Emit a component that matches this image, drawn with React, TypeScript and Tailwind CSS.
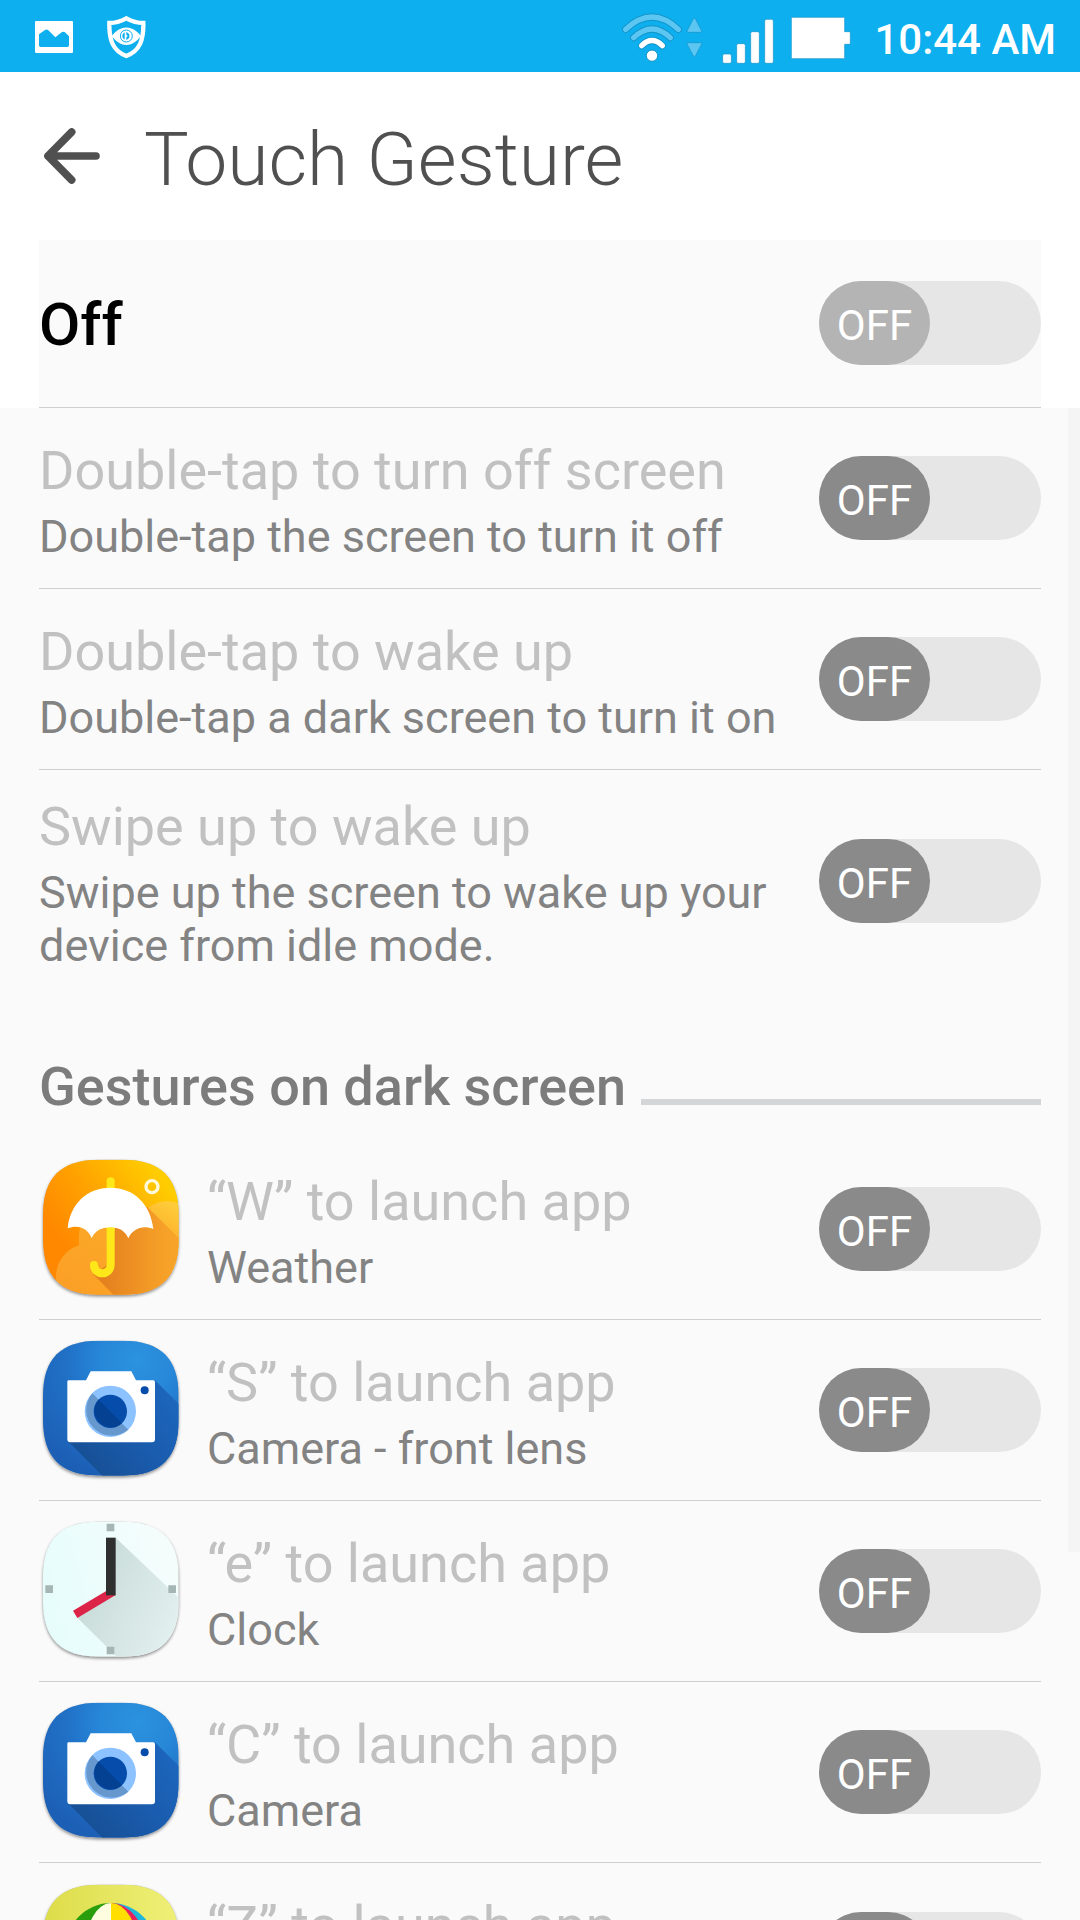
import { useState, type ReactNode } from "react";

const SQUIRCLE =
  "M205 61 H280 C392 61 446 115 446 225 V300 C446 412 392 466 280 466 H205 C93 466 39 412 39 300 V225 C39 115 93 61 205 61 Z";

function AppIcon({ id, children }: { id: string; children: ReactNode }) {
  return (
    <svg
      viewBox="27 53 432 432"
      className="size-36 shrink-0"
      aria-hidden="true"
    >
      <defs>
        <clipPath id={`${id}-clip`}>
          <path d={SQUIRCLE} />
        </clipPath>
        <filter id={`${id}-shadow`} x="-10%" y="-10%" width="120%" height="120%">
          <feDropShadow dx="0" dy="5" stdDeviation="4" floodColor="#000" floodOpacity="0.45" />
        </filter>
      </defs>
      <path d={SQUIRCLE} fill="#bbb" filter={`url(#${id}-shadow)`} />
      <g clipPath={`url(#${id}-clip)`}>{children}</g>
    </svg>
  );
}

function WeatherIcon() {
  return (
    <AppIcon id="weather">
      <defs>
        <linearGradient id="weather-sky" x1="0.15" y1="0.6" x2="0.8" y2="0.1">
          <stop offset="0" stopColor="#ff8800" />
          <stop offset="0.45" stopColor="#ffa200" />
          <stop offset="1" stopColor="#ffcc00" />
        </linearGradient>
        <linearGradient id="weather-cloud" x1="0.3" y1="1" x2="1" y2="0">
          <stop offset="0" stopColor="#fba026" />
          <stop offset="0.6" stopColor="#fba928" />
          <stop offset="1" stopColor="#ffd23c" />
        </linearGradient>
        <linearGradient id="weather-shade" x1="0.1" y1="0.5" x2="1" y2="0.5">
          <stop offset="0" stopColor="#e4801f" />
          <stop offset="0.75" stopColor="#f6a028" />
          <stop offset="1" stopColor="#f8a529" />
        </linearGradient>
      </defs>
      <rect x="30" y="50" width="430" height="430" fill="url(#weather-sky)" />
      <path
        d="M78 480 V412 A98 98 0 0 1 147 318 C142 240 175 200 240 200 C300 190 330 210 352 208 A88 88 0 0 1 460 200 V480 Z"
        fill="url(#weather-cloud)"
      />
      <path d="M242 210 L352 203 L460 310 V480 H264 L190 405 L242 370 Z" fill="url(#weather-shade)" />
      <path d="M242 270 V126" stroke="#ffe81a" strokeWidth="24" strokeLinecap="round" />
      <path
        d="M242 250 V377 A25 25 0 0 1 192 377"
        fill="none"
        stroke="#ffe81a"
        strokeWidth="24"
        strokeLinecap="round"
      />
      <path
        d="M113 267 C120 195 170 145 241 145 C312 145 362 195 370 269 C338 256 308 268 295 297 C285 274 266 264 241 264 C215 264 195 274 185 297 C175 268 145 254 113 267 Z"
        fill="#fff"
      />
      <circle cx="366" cy="142" r="18" fill="none" stroke="#fff9dc" strokeWidth="10" />
    </AppIcon>
  );
}

function CameraIcon({ id }: { id: string }) {
  return (
    <AppIcon id={id}>
      <defs>
        <radialGradient id={`${id}-bg`} cx="0.68" cy="0.16" r="0.85">
          <stop offset="0" stopColor="#2b93df" />
          <stop offset="0.3" stopColor="#2787d8" />
          <stop offset="0.6" stopColor="#2070c6" />
          <stop offset="1" stopColor="#1c60b6" />
        </radialGradient>
        <linearGradient id={`${id}-shade`} x1="0.1" y1="0.9" x2="1" y2="0.3">
          <stop offset="0" stopColor="#164e91" />
          <stop offset="0.5" stopColor="#1a5aab" />
          <stop offset="1" stopColor="#1c66bc" />
        </linearGradient>
      </defs>
      <rect x="30" y="50" width="430" height="430" fill={`url(#${id}-bg)`} />
      <path d="M374 179 L460 265 V480 H230 L115 363 Z" fill={`url(#${id}-shade)`} />
      <path
        d="M116 180 H168 L182 153 H304 L318 180 H370 Q375 180 375 185 V357 Q375 366 366 366 H121 Q112 366 112 357 V184 Q112 180 116 180 Z"
        fill="#fff"
      />
      <circle cx="241" cy="273" r="77" fill="#8cc2ff" />
      <path d="M187 219 A77 77 0 0 0 295 328 Z" fill="#6697cd" />
      <circle cx="241" cy="273" r="50" fill="#064cab" />
      <path d="M206 238 A50 50 0 0 0 276 309 Z" fill="#044192" />
      <circle cx="344" cy="210" r="12" fill="#064cab" />
    </AppIcon>
  );
}

function ClockIcon() {
  return (
    <AppIcon id="clock">
      <defs>
        <linearGradient id="clock-bg" x1="0" y1="0.5" x2="1" y2="0.2">
          <stop offset="0" stopColor="#e6fdfc" />
          <stop offset="1" stopColor="#f6fdfc" />
        </linearGradient>
        <linearGradient id="clock-shade" x1="0.1" y1="0.4" x2="0.9" y2="0.8">
          <stop offset="0" stopColor="#c9dcda" />
          <stop offset="1" stopColor="#e2f0ef" />
        </linearGradient>
      </defs>
      <rect x="30" y="50" width="430" height="430" fill="url(#clock-bg)" />
      <path d="M257 109 L460 302 V480 H274 L142 349 L230 270 Z" fill="url(#clock-shade)" />
      <path d="M230 67 h23 v23 h-23 Z M415 252 h23 v23 h-23 Z M230 436 h23 v23 h-23 Z M46 252 h23 v23 h-23 Z" fill="#a5b6b4" />
      <path d="M129 328 L230 268 L257 281 L142 350 Z" fill="#dc2449" />
      <rect x="228" y="109" width="29" height="173" fill="#2f2f2f" />
    </AppIcon>
  );
}

function GalleryIcon() {
  return (
    <AppIcon id="gallery">
      <defs>
        <linearGradient id="gallery-bg" x1="0" y1="0" x2="1" y2="0">
          <stop offset="0" stopColor="#dcdc48" />
          <stop offset="1" stopColor="#f0f07a" />
        </linearGradient>
        <clipPath id="gallery-left">
          <rect x="90" y="100" width="153" height="300" />
        </clipPath>
        <clipPath id="gallery-right">
          <rect x="243" y="100" width="160" height="300" />
        </clipPath>
      </defs>
      <rect x="30" y="50" width="430" height="430" fill="url(#gallery-bg)" />
      <g clipPath="url(#gallery-left)">
        <ellipse cx="243" cy="251" rx="135" ry="135" fill="#2a9d0c" />
        <ellipse cx="243" cy="251" rx="76" ry="135" fill="#fffde0" />
      </g>
      <g clipPath="url(#gallery-right)">
        <ellipse cx="243" cy="251" rx="135" ry="135" fill="#1fb6dc" />
        <ellipse cx="243" cy="251" rx="103" ry="135" fill="#e8205c" />
        <ellipse cx="243" cy="251" rx="80" ry="135" fill="#ffde00" />
      </g>
    </AppIcon>
  );
}

function Switch({ labelledBy, pale = false }: { labelledBy: string; pale?: boolean }) {
  const [on, setOn] = useState(false);
  const thumb = on ? "ml-auto bg-[#0dafee]" : pale ? "bg-[#b4b4b4]" : "bg-[#8a8a8a]";
  return (
    <label className="relative flex h-21 w-[222px] shrink-0 cursor-pointer rounded-full bg-[#e6e6e6]">
      <input
        type="checkbox"
        role="switch"
        aria-labelledby={labelledBy}
        checked={on}
        onChange={() => setOn(!on)}
        className="absolute inset-0 cursor-pointer opacity-0"
      />
      <span
        className={`flex h-full w-1/2 items-center justify-center rounded-full pt-1.5 text-[42px] leading-none text-white ${thumb}`}
      >
        {on ? "ON" : "OFF"}
      </span>
    </label>
  );
}

type Setting = { id: string; title: string; detail: string; icon?: ReactNode };

const WAKE_SETTINGS: Setting[] = [
  { id: "tap-off", title: "Double-tap to turn off screen", detail: "Double-tap the screen to turn it off" },
  { id: "tap-wake", title: "Double-tap to wake up", detail: "Double-tap a dark screen to turn it on" },
  { id: "swipe-wake", title: "Swipe up to wake up", detail: "Swipe up the screen to wake up your device from idle mode." },
];

const LAUNCH_SETTINGS: Setting[] = [
  { id: "w", title: "“W” to launch app", detail: "Weather", icon: <WeatherIcon /> },
  { id: "s", title: "“S” to launch app", detail: "Camera - front lens", icon: <CameraIcon id="camera-front" /> },
  { id: "e", title: "“e” to launch app", detail: "Clock", icon: <ClockIcon /> },
  { id: "c", title: "“C” to launch app", detail: "Camera", icon: <CameraIcon id="camera" /> },
  { id: "z", title: "“Z” to launch app", detail: "Gallery", icon: <GalleryIcon /> },
];

function SettingList({ items }: { items: Setting[] }) {
  return (
    <ul>
      {items.map((item) => (
        <li
          key={item.id}
          className="flex min-h-[181px] items-center border-b border-[#cfcfcf] last:border-b-0"
        >
          {item.icon}
          <div className={item.icon ? "ml-6 flex-1 pt-[25px] pb-5" : "flex-1 pt-[25px] pb-5"}>
            <h3 id={item.id} className="mb-[7px] text-[54px] leading-[64px] text-[#c1c1c1]">
              {item.title}
            </h3>
            <p className="text-[45px] leading-[53px] text-[#838383]">{item.detail}</p>
          </div>
          <Switch labelledBy={item.id} />
        </li>
      ))}
    </ul>
  );
}

function StatusBar() {
  return (
    <div className="flex h-18 shrink-0 items-center bg-[#0dafee] pr-6 pl-[35px] text-white">
      <svg viewBox="105 0 114 216" className="h-18 w-[38px]" aria-hidden="true">
        <path
          fill="#fff"
          fillRule="evenodd"
          d="M108 63 H216 Q219 63 219 66 V156 Q219 159 216 159 H108 Q105 159 105 156 V66 Q105 63 108 63 Z M117 103 V136 Q117 141 122 141 H202 Q207 141 207 136 V109 L195 97 Q190 93 185 97 L166 112 L145 91 Q140 86 135 90 Z"
        />
      </svg>
      <svg viewBox="320 0 117 216" className="ml-[34px] h-18 w-[39px]" aria-hidden="true">
        <path
          d="M378 55 Q352 69 327 69 C326 120 337 152 378 168 C419 152 430 120 429 69 Q404 69 378 55 Z"
          fill="none"
          stroke="#fff"
          strokeWidth="13"
        />
        <path d="M334 108 C362 74 394 74 422 108 C394 144 362 144 334 108 Z" fill="#fff" />
        <circle cx="378" cy="108" r="18" fill="none" stroke="#0dafee" strokeWidth="3" />
        <path d="M373 97 A12 12 0 0 0 373 119 Z M378 95 L387 103 V113 L378 121 V112 L382 108 L378 104 Z" fill="#0dafee" />
      </svg>
      <svg viewBox="66 0 243 216" className="ml-auto h-18 w-[81px]" aria-hidden="true">
        <g fill="none" strokeLinecap="round">
          <path d="M77 88 Q156 14 235 88" stroke="#1293c8" strokeWidth="21" />
          <path d="M77 88 Q156 14 235 88" stroke="#5bc6f2" strokeWidth="16" />
          <path d="M101 113 Q156 61 211 113" stroke="#1293c8" strokeWidth="21" />
          <path d="M101 113 Q156 61 211 113" stroke="#5bc6f2" strokeWidth="16" />
          <path d="M125 137 Q156 106 187 137" stroke="#1293c8" strokeWidth="21" />
          <path d="M125 137 Q156 106 187 137" stroke="#fff" strokeWidth="16" />
        </g>
        <circle cx="156" cy="167" r="17" fill="#fff" stroke="#1293c8" strokeWidth="3" />
        <path
          d="M280 56 Q283 53 286 56 L305 93 Q306 97 302 97 H264 Q260 97 261 93 Z M280 168 Q283 171 286 168 L305 132 Q306 128 302 128 H264 Q260 128 261 132 Z"
          fill="#5bc6f2"
          stroke="#1293c8"
          strokeWidth="2"
        />
      </svg>
      <svg viewBox="366 0 156 216" className="ml-[19px] h-18 w-[52px]" aria-hidden="true">
        <g fill="#fff" stroke="#1293c8" strokeWidth="2">
          <rect x="368" y="162" width="26" height="28" rx="5" />
          <rect x="410" y="131" width="26" height="59" rx="5" />
          <rect x="452" y="95" width="26" height="95" rx="5" />
          <rect x="494" y="58" width="26" height="132" rx="5" />
        </g>
      </svg>
      <svg viewBox="573 0 180 216" className="ml-[17px] h-18 w-15" aria-hidden="true">
        <path
          d="M577 52 H731 Q734 52 734 55 V95 H748 Q751 95 751 98 V130 Q751 133 748 133 H734 V173 Q734 176 731 176 H577 Q574 176 574 173 V55 Q574 52 577 52 Z"
          fill="#fff"
          stroke="#1293c8"
          strokeWidth="2"
        />
      </svg>
      <time className="ml-[23px] pt-2 text-[42px] leading-none font-medium">10:44 AM</time>
    </div>
  );
}

export default function App() {
  return (
    <div className="flex h-screen flex-col overflow-hidden bg-white font-[Roboto,sans-serif]">
      <StatusBar />
      <header className="flex h-42 shrink-0 items-center px-[39px]">
        <button type="button" aria-label="Back" className="pl-[5px]">
          <svg viewBox="132 384 168 168" className="size-14" aria-hidden="true">
            <path
              d="M215 396 L144 468 L215 540 M144 468 H288"
              fill="none"
              stroke="#505050"
              strokeWidth="23"
              strokeLinecap="round"
              strokeLinejoin="round"
            />
          </svg>
        </button>
        <h1 className="ml-11 pt-1.5 text-[75px] leading-none font-light text-[#505050]">Touch Gesture</h1>
      </header>
      <section className="mx-[39px] flex h-42 shrink-0 items-center justify-between border-b border-[#cfcfcf] bg-[#fafafa] pb-px">
        <h2 id="master" className="pt-1 text-[60px] leading-none font-medium text-black">
          Off
        </h2>
        <Switch labelledBy="master" pale />
      </section>
      <main className="relative flex-1 overflow-hidden bg-[#fafafa] px-[39px]">
        <SettingList items={WAKE_SETTINGS} />
        <div className="flex items-end pt-[63px] pb-5">
          <h2 className="text-[54px] leading-[64px] font-medium text-[#7c7c7c]">Gestures on dark screen</h2>
          <div className="mb-3.5 ml-[15px] h-1.5 flex-1 bg-[#d4d5d6]" />
        </div>
        <SettingList items={LAUNCH_SETTINGS} />
        <div className="absolute top-0 right-0 h-[1144px] w-3 bg-[#f5f5f5]" />
      </main>
    </div>
  );
}
